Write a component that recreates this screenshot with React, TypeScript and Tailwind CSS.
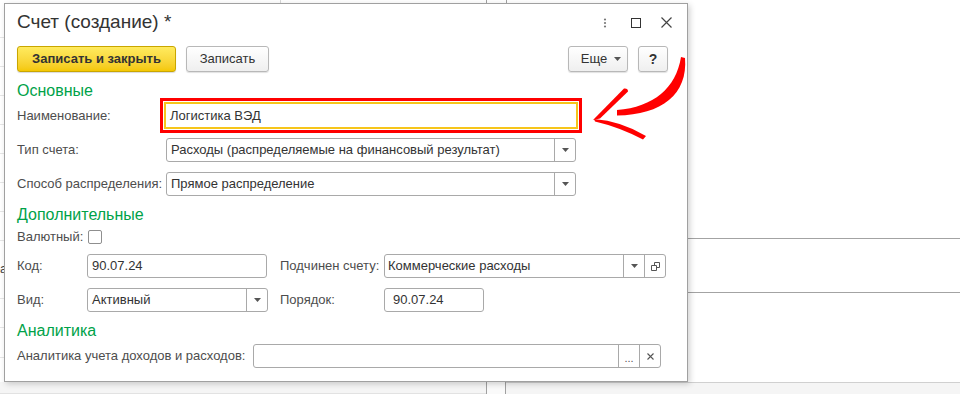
import React from 'react';

const font = "font-['Liberation_Sans',Arial,sans-serif]";

function Tri() {
  return (
    <svg width="7" height="4" viewBox="0 0 7 4">
      <path d="M0 0h7L3.5 4z" fill="#555" />
    </svg>
  );
}

function Btn({ children }: { children: React.ReactNode }) {
  return <div className="flex w-[21px] items-center justify-center border-l border-[#a9a9a9]">{children}</div>;
}

function Field({
  w,
  value,
  pad = 'pl-[4px]',
  children,
}: {
  w: string;
  value?: string;
  pad?: string;
  children?: React.ReactNode;
}) {
  return (
    <div className={`flex h-[24px] shrink-0 rounded-[3px] border border-[#a9a9a9] bg-white ${w}`}>
      <div className={`flex flex-1 items-center text-[13px] text-[#333] ${pad}`}>{value}</div>
      {children}
    </div>
  );
}

function Label({ w, children }: { w: string; children: React.ReactNode }) {
  return <div className={`shrink-0 text-[13px] text-[#4d4d4d] ${w}`}>{children}</div>;
}

function Heading({ mt, children }: { mt: string; children: React.ReactNode }) {
  return <div className={`h-[14px] text-[16px] leading-[14px] text-[#00a249] ${mt}`}>{children}</div>;
}

function Background() {
  const rows = [37, 66, 95, 124, 153, 182, 211, 240, 269, 298, 327, 357];
  return (
    <>
      {rows.map((y) => (
        <div key={y} className="absolute left-0 h-px w-[4px] bg-[#e6e6e6]" style={{ top: y }} />
      ))}
      <div className="absolute left-0 top-[262px] text-[13px] leading-none text-[#444]">a</div>
      <div className="absolute left-[280px] top-0 h-[4px] w-px bg-[#d8d8d8]" />
      <div className="absolute left-[486px] top-0 h-[4px] w-px bg-[#a0a0a0]" />
      <div className="absolute left-[506px] top-0 h-[4px] w-px bg-[#a0a0a0]" />
      <div className="absolute left-[687px] top-[238px] h-px w-[273px] bg-[#a3a3a3]" />
      <div className="absolute left-[687px] top-[292px] h-px w-[273px] bg-[#a3a3a3]" />
      <div className="absolute left-0 top-[382px] flex h-[12px] w-[960px] bg-[#f5f5f5]">
        <div className="w-[486px] border-b border-[#e2e2e2]" />
        <div className="w-[20px] border-x border-[#a0a0a0] bg-[#fafafa]" />
        <div className="flex-1 border-t border-[#d0d0d0]" />
      </div>
    </>
  );
}

function Arrow() {
  return (
    <svg className="pointer-events-none absolute left-0 top-0" width="960" height="394" viewBox="0 0 960 394">
      <path d="M685 58 C688 94 662 115 617 115.5 L617 110 C654 107 676 88 681 57 Z" fill="#ff0000" />
      <path d="M593 120 L624 88.5 Q628 88 628 91.5 L600 118.5 Z" fill="#ff0000" />
      <path d="M594 119 Q621 121 646 136 L643 139.5 Q619 127 595 121.5 Z" fill="#ff0000" />
    </svg>
  );
}

export default function App() {
  return (
    <div className={`relative h-[394px] w-[960px] overflow-hidden bg-white ${font}`}>
      <Background />

      <div className="absolute left-[4px] top-[3px] flex h-[379px] w-[684px] flex-col border border-[#a0a0a0] bg-white pl-[12px] pr-[20px] shadow-[2px_2px_6px_rgba(0,0,0,0.18)]">
        <div className="flex h-[37px] items-center">
          <div className="text-[19px] text-[#333]">Счет (создание) *</div>
          <div className="ml-auto flex items-center">
            <svg width="4" height="10" viewBox="0 0 4 10" className="mr-[24px]">
              <circle cx="2" cy="1.5" r="1.1" fill="#777" />
              <circle cx="2" cy="5" r="1.1" fill="#777" />
              <circle cx="2" cy="8.5" r="1.1" fill="#777" />
            </svg>
            <div className="mr-[20px] h-[10px] w-[10px] border-[1.5px] border-[#333]" />
            <svg width="11" height="11" viewBox="0 0 11 11" className="mr-[-5px]">
              <path d="M0.5 0.5L10.5 10.5M10.5 0.5L0.5 10.5" stroke="#444" strokeWidth="1.2" />
            </svg>
          </div>
        </div>

        <div className="mt-[5px] flex h-[26px]">
          <div className="flex w-[159px] items-center justify-center rounded-[3px] border border-[#c9a600] bg-gradient-to-b from-[#ffeb5e] to-[#f4c800] text-[13px] font-bold text-[#333] shadow-[0_1px_1px_rgba(0,0,0,0.15)]">
            Записать и закрыть
          </div>
          <div className="ml-[10px] flex w-[83px] items-center justify-center rounded-[3px] border border-[#b8b8b8] bg-gradient-to-b from-white to-[#efefef] text-[13px] text-[#333] shadow-[0_1px_1px_rgba(0,0,0,0.12)]">
            Записать
          </div>
          <div className="ml-auto flex w-[60px] items-center justify-center gap-[7px] rounded-[3px] border border-[#b8b8b8] bg-gradient-to-b from-white to-[#efefef] pl-[6px] text-[13px] text-[#333] shadow-[0_1px_1px_rgba(0,0,0,0.12)]">
            Еще
            <Tri />
          </div>
          <div className="ml-[10px] mr-[-1px] flex w-[30px] items-center justify-center rounded-[3px] border border-[#b8b8b8] bg-gradient-to-b from-white to-[#efefef] text-[14px] font-bold text-[#333] shadow-[0_1px_1px_rgba(0,0,0,0.12)]">
            ?
          </div>
        </div>

        <Heading mt="mt-[12px]">Основные</Heading>

        <div className="flex h-[35px] items-center">
          <Label w="w-[143px]">Наименование:</Label>
          <div className="h-[35px] w-[422px] border-[3px] border-[#ff0000] p-px">
            <div className="flex h-full items-center border-2 border-[#f6c51a] pl-[4px] text-[13px] text-[#333]">
              Логистика ВЭД
            </div>
          </div>
        </div>

        <div className="mt-[5px] flex items-center">
          <Label w="w-[149px]">Тип счета:</Label>
          <Field w="w-[410px]" value="Расходы (распределяемые на финансовый результат)">
            <Btn>
              <Tri />
            </Btn>
          </Field>
        </div>

        <div className="mt-[10px] flex items-center">
          <Label w="w-[149px]">Способ распределения:</Label>
          <Field w="w-[410px]" value="Прямое распределение">
            <Btn>
              <Tri />
            </Btn>
          </Field>
        </div>

        <Heading mt="mt-[12px]">Дополнительные</Heading>

        <div className="mt-[8px] flex h-[14px] items-center">
          <Label w="w-[71px]">Валютный:</Label>
          <div className="h-[14px] w-[14px] rounded-[2px] border border-[#8f8f8f] bg-white" />
        </div>

        <div className="mt-[10px] flex items-center">
          <Label w="w-[70px]">Код:</Label>
          <Field w="w-[180px]" value="90.07.24" />
          <Label w="w-[117px] pl-[13px]">Подчинен счету:</Label>
          <Field w="w-[282px]" value="Коммерческие расходы" pad="pl-[3px]">
            <Btn>
              <Tri />
            </Btn>
            <Btn>
              <svg width="9" height="9" viewBox="0 0 9 9">
                <path d="M3.5 0.5h5v5h-5z" fill="none" stroke="#555" />
                <path d="M0.5 3.5h5v5h-5z" fill="white" stroke="#555" />
              </svg>
            </Btn>
          </Field>
        </div>

        <div className="mt-[10px] flex items-center">
          <Label w="w-[70px]">Вид:</Label>
          <Field w="w-[181px]" value="Активный">
            <Btn>
              <Tri />
            </Btn>
          </Field>
          <Label w="w-[116px] pl-[12px]">Порядок:</Label>
          <Field w="w-[100px]" value="90.07.24" pad="pl-[8px]" />
        </div>

        <Heading mt="mt-[12px]">Аналитика</Heading>

        <div className="mt-[6px] flex items-center">
          <Label w="w-[236px]">Аналитика учета доходов и расходов:</Label>
          <Field w="w-[408px]">
            <Btn>
              <span className="mt-[4px] text-[11px] leading-none text-[#555]">...</span>
            </Btn>
            <Btn>
              <svg width="7" height="7" viewBox="0 0 7 7">
                <path d="M0.5 0.5L6.5 6.5M6.5 0.5L0.5 6.5" stroke="#555" strokeWidth="1.1" />
              </svg>
            </Btn>
          </Field>
        </div>
      </div>

      <Arrow />
    </div>
  );
}
